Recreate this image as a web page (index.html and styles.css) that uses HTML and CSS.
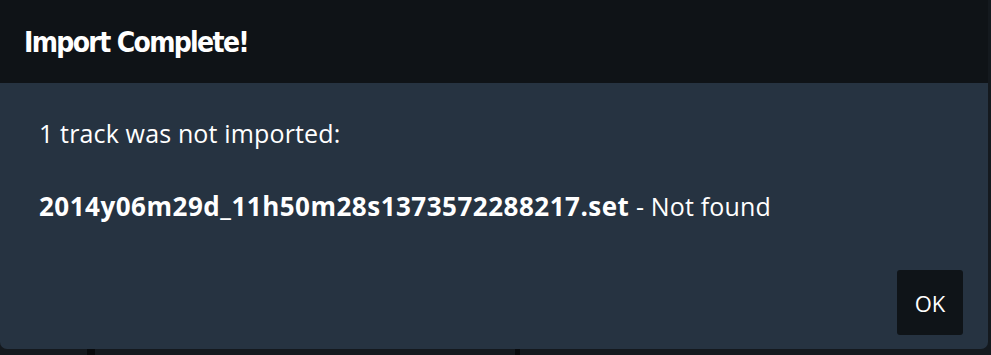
FILE: index.html
```html
<!DOCTYPE html>
<html lang="en">
<head>
  <meta charset="UTF-8">
  <title>Import Complete</title>
  <link rel="stylesheet" href="styles.css">
</head>
<body>

  <div class="dialog">
    <div class="dialog-header">
      <h1>Import Complete!</h1>
    </div>
    <div class="dialog-body">
      <p>1 track was not imported:</p>
      <p><strong>2014y06m29d_11h50m28s1373572288217.set</strong> - Not found</p>
    </div>
    <div class="dialog-footer">
      <button class="ok-btn">OK</button>
    </div>
  </div>

  <div class="backdrop-strip">
    <span class="mark mark-a"></span>
    <span class="mark mark-b"></span>
  </div>

</body>
</html>
```

FILE: styles.css
```css
html, body {
  margin: 0;
  padding: 0;
}

body {
  background-color: #14191e;
  width: 991px;
  height: 355px;
  overflow: hidden;
  font-family: "Open Sans", "Noto Sans", sans-serif;
  color: #fff;
}

.dialog {
  width: 988px;
  height: 349px;
  background-color: #263341;
  border-radius: 0 0 7px 7px;
  display: flex;
  flex-direction: column;
  overflow: hidden;
}

.dialog-header {
  height: 83px;
  background-color: #0f1317;
  display: flex;
  align-items: center;
  padding-left: 24px;
}

.dialog-header h1 {
  margin: 0;
  font-family: "DejaVu Sans", sans-serif;
  font-stretch: condensed;
  font-weight: bold;
  font-size: 28px;
  letter-spacing: -1.65px;
  margin-top: 1px;
}

.dialog-body {
  flex: 1;
  padding: 34px 39px 0;
  font-size: 25px;
  letter-spacing: 0.15px;
}

.dialog-body p {
  margin: 0 0 41px;
  line-height: 32px;
}

.dialog-body strong {
  font-weight: bold;
  font-size: 26px;
  letter-spacing: 0.5px;
}

.dialog-footer {
  display: flex;
  justify-content: flex-end;
  padding: 0 25px 14px 0;
}

.ok-btn {
  width: 66px;
  height: 65px;
  background-color: #0f1418;
  color: #fff;
  border: none;
  border-radius: 3px;
  font-family: "Open Sans", sans-serif;
  font-size: 22px;
  padding: 0;
}

.backdrop-strip {
  position: relative;
  height: 6px;
}

.mark {
  position: absolute;
  top: 0;
  width: 8px;
  height: 6px;
  background-color: #080a0c;
}

.mark-a { left: 87px; }
.mark-b { left: 515px; width: 5px; }
```
